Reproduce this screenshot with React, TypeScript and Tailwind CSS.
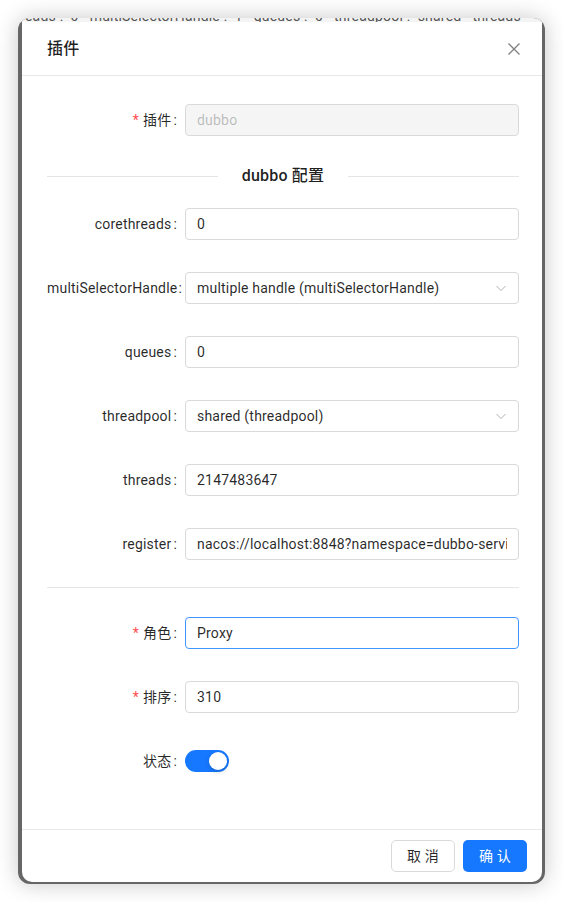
import React from "react";

const FONT = { fontFamily: '"Roboto", "Noto Sans CJK SC", sans-serif' };

function Label({ text, required, tight }: { text: string; required?: boolean; tight?: boolean }) {
  return (
    <div className="w-[138px] shrink-0 flex items-center justify-end whitespace-nowrap text-[14px] text-[rgba(0,0,0,0.85)]">
      {required && <span className="text-[#ff4d4f] mr-[4px] text-[14px] leading-none">*</span>}
      <span>{text}</span>
      <span className={tight ? "ml-[1px] mr-[3px]" : "ml-[2px] mr-[8px]"}>:</span>
    </div>
  );
}

function Chevron() {
  return (
    <svg width="12" height="12" viewBox="0 0 12 12" fill="none" stroke="rgba(0,0,0,0.3)" strokeWidth="1">
      <path d="M1.5 4 L6 8.5 L10.5 4" />
    </svg>
  );
}

function Field({
  label,
  value,
  required,
  select,
  disabled,
  focused,
  tight,
}: {
  label: string;
  value: string;
  required?: boolean;
  select?: boolean;
  disabled?: boolean;
  focused?: boolean;
  tight?: boolean;
}) {
  const border = focused ? "border-[#4096ff]" : "border-[#d9d9d9]";
  const bg = disabled ? "bg-[#f5f5f5]" : "bg-white";
  const color = disabled ? "text-[rgba(0,0,0,0.25)]" : "text-[rgba(0,0,0,0.85)]";
  return (
    <div className="flex h-[32px] items-center">
      <Label text={label} required={required} tight={tight} />
      <div
        className={`flex-1 min-w-0 h-[32px] border ${border} ${bg} rounded-[4px] flex items-center pl-[11px] pr-[11px] text-[14px] ${color}`}
      >
        <div className="flex-1 min-w-0 overflow-hidden whitespace-nowrap">{value}</div>
        {select && (
          <div className="ml-2 shrink-0 flex items-center">
            <Chevron />
          </div>
        )}
      </div>
    </div>
  );
}

export default function App() {
  return (
    <div className="w-[563px] h-[902px] bg-white relative tracking-[0.2px]" style={FONT}>
      <div className="absolute left-[18px] top-[18px] w-[527px] h-[866px] rounded-[12px] bg-[#666666] overflow-hidden shadow-[0_0_22px_rgba(0,0,0,0.22)] flex flex-col">
        {/* clipped background text strip */}
        <div className="h-[4px] bg-[#f4f4f4] overflow-hidden shrink-0">
          <div className="mt-[-12px] pl-[7px] whitespace-nowrap text-[14px] text-[#555]">
            eads&nbsp;:&nbsp;&nbsp;0&nbsp;&nbsp;&nbsp;multiSelectorHandle&nbsp;:&nbsp;&nbsp;1&nbsp;&nbsp;&nbsp;queues&nbsp;:&nbsp;&nbsp;0&nbsp;&nbsp;&nbsp;threadpool&nbsp;:&nbsp;&nbsp;shared&nbsp;&nbsp;&nbsp;threads
          </div>
        </div>
        {/* dialog */}
        <div className="flex-1 ml-[4px] mr-[3px] mb-[2px] bg-white rounded-b-[10px] flex flex-col">
          {/* header */}
          <div className="h-[54px] shrink-0 border-b border-[#e8e8e8] flex items-center justify-between px-[25px]">
            <div className="text-[16px] font-medium text-[rgba(0,0,0,0.88)]">插件</div>
            <svg width="14" height="14" viewBox="0 0 14 14" stroke="rgba(0,0,0,0.5)" strokeWidth="1.3" className="mr-[-4px]">
              <path d="M1.5 1.5 L12.5 12.5 M12.5 1.5 L1.5 12.5" />
            </svg>
          </div>
          {/* body */}
          <div className="flex-1 pl-[25px] pr-[23px] pt-[28px]">
            <Field label="插件" value="dubbo" required disabled />
            <div className="mt-[29px] mb-[21px] h-[22px] flex items-center gap-6">
              <div className="flex-1 h-px bg-[#e5e5e5]" />
              <div className="text-[16px] font-medium text-[rgba(0,0,0,0.88)] whitespace-nowrap">dubbo 配置</div>
              <div className="flex-1 h-px bg-[#e5e5e5]" />
            </div>
            <div className="flex flex-col gap-[32px]">
              <Field label="corethreads" value="0" />
              <Field label="multiSelectorHandle" value="multiple handle (multiSelectorHandle)" select tight />
              <Field label="queues" value="0" />
              <Field label="threadpool" value="shared (threadpool)" select />
              <Field label="threads" value="2147483647" />
              <Field label="register" value="nacos://localhost:8848?namespace=dubbo-service&amp;group=DEFAULT" />
            </div>
            <div className="h-px bg-[#e5e5e5] mt-[27px] mb-[29px]" />
            <div className="flex flex-col gap-[32px]">
              <Field label="角色" value="Proxy" required focused />
              <Field label="排序" value="310" required />
              <div className="flex h-[32px] items-center">
                <Label text="状态" />
                <div className="w-[44px] h-[22px] rounded-full bg-[#1677ff] relative">
                  <div className="absolute right-[2px] top-[2px] w-[18px] h-[18px] rounded-full bg-white shadow-[0_2px_4px_rgba(0,35,11,0.2)]" />
                </div>
              </div>
            </div>
          </div>
          {/* footer */}
          <div className="shrink-0 border-t border-[#e8e8e8] h-[53px] flex items-center justify-end gap-[8px] pr-[15px]">
            <button className="w-[64px] h-[32px] rounded-[5px] border border-[#d9d9d9] bg-white text-[14px] text-[rgba(0,0,0,0.85)]">
              取 消
            </button>
            <button className="w-[64px] h-[32px] rounded-[5px] bg-[#1677ff] text-[14px] text-white">
              确 认
            </button>
          </div>
        </div>
      </div>
    </div>
  );
}
